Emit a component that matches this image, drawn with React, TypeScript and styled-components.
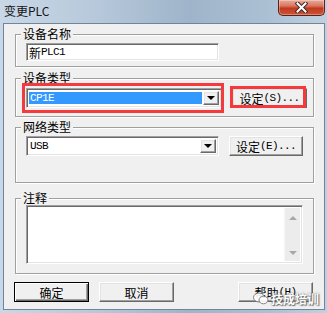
import styled, { createGlobalStyle, css } from 'styled-components';

const GlobalStyle = createGlobalStyle`
  html, body {
    margin: 0;
    padding: 0;
    background: #b8cadc;
  }
  body {
    font-family: "Noto Sans CJK SC", "Liberation Sans", sans-serif;
  }
`;

const sunken = css`
  border: 1px solid;
  border-color: #a0a0a0 #fff #fff #a0a0a0;
  box-shadow: inset 1px 1px 0 #696969, inset -1px -1px 0 #e3e3e3;
`;

const raised = css`
  border: 1px solid;
  border-color: #fff #696969 #696969 #fff;
  box-shadow: inset -1px -1px 0 #a0a0a0, inset 1px 1px 0 #e3e3e3;
`;

const Window = styled.div`
  position: relative;
  width: 327px;
  height: 313px;
  box-sizing: border-box;
  padding: 0 2px 3px 3px;
  display: flex;
  flex-direction: column;
  overflow: hidden;
  background: linear-gradient(90deg, #c9d8e7 0%, #b6c8da 30%, #9fb4ca 58%, #acc0d4 82%, #c0d0e0 100%);
`;

const TitleBar = styled.div`
  height: 23px;
  display: flex;
  align-items: flex-start;
  justify-content: space-between;
`;

const Title = styled.span`
  margin: 3px 0 0 1px;
  font-size: 12px;
  line-height: 16px;
  color: #151515;
`;

const CloseButton = styled.div`
  width: 47px;
  height: 16px;
  box-sizing: border-box;
  border: 1px solid #5a2118;
  border-top: none;
  border-radius: 0 0 5px 5px;
  background: linear-gradient(#e9ab9c 0%, #d8755e 40%, #c1391d 55%, #cc5536 100%);
  box-shadow: inset 0 0 0 1px rgba(255, 255, 255, 0.3);
  display: flex;
  align-items: center;
  justify-content: center;
`;

const Client = styled.div`
  flex: 1;
  position: relative;
  background: #f0f0f0;
  border: 1px solid #6f859b;
  padding: 4px 10px 0 11px;
`;

const Group = styled.fieldset<{ $top: number; $bottom: number }>`
  margin: ${p => p.$top}px 0 0;
  padding: 0 10px ${p => p.$bottom}px;
  min-width: 0;
  border: 1px solid #a0a0a0;
  box-shadow: inset 1px 1px 0 #fff, 1px 1px 0 #fff;
`;

const Legend = styled.legend`
  margin-left: -5px;
  padding: 0 2px;
  height: 12px;
  font-size: 12px;
  line-height: 12px;
  color: #000;
  background: #f0f0f0;
`;

const Row = styled.div<{ $top: number }>`
  display: flex;
  gap: 10px;
  margin-top: ${p => p.$top}px;
`;

const Lat = styled.span`
  font-family: "Liberation Mono", monospace;
  font-size: 11px;
  letter-spacing: -0.6px;
`;

const Edit = styled.div`
  width: 193px;
  height: 18px;
  box-sizing: border-box;
  padding-left: 2px;
  display: flex;
  align-items: center;
  font-size: 12px;
  background: #fff;
  ${sunken}
`;

const Combo = styled.div`
  width: 196px;
  height: 20px;
  box-sizing: border-box;
  padding: 2px;
  display: flex;
  background: #fff;
  ${sunken}
`;

const ComboValue = styled.div<{ $selected?: boolean }>`
  flex: 1;
  margin: 1px 1px 1px 0;
  padding-left: 1px;
  display: flex;
  align-items: center;
  color: ${p => (p.$selected ? '#fff' : '#000')};
  background: ${p => (p.$selected ? '#3399ff' : 'transparent')};
`;

const DropButton = styled.div`
  width: 16px;
  box-sizing: border-box;
  display: flex;
  align-items: center;
  justify-content: center;
  background: #f0f0f0;
  ${raised}
`;

const Arrow = styled.div`
  width: 0;
  height: 0;
  border-left: 4px solid transparent;
  border-right: 4px solid transparent;
  border-top: 4px solid #000;
`;

const Marked = styled.div<{ $inset: string }>`
  position: relative;
  &::after {
    content: '';
    position: absolute;
    inset: ${p => p.$inset};
    border: 3px solid #f43a3c;
    pointer-events: none;
  }
`;

const Button = styled.button<{ $default?: boolean }>`
  appearance: none;
  width: 75px;
  height: 20px;
  box-sizing: border-box;
  padding: 0;
  display: flex;
  align-items: center;
  justify-content: center;
  font-family: "Noto Sans CJK SC", sans-serif;
  font-size: 12px;
  color: #000;
  background: #f0f0f0;
  ${raised}
  ${p =>
    p.$default &&
    css`
      border-color: #000;
      box-shadow: inset 1px 1px 0 #fff, inset -1px -1px 0 #696969, inset -2px -2px 0 #a0a0a0;
    `}
`;

const Memo = styled.div`
  width: 277px;
  height: 59px;
  box-sizing: border-box;
  padding: 2px 2px 2px 0;
  display: flex;
  justify-content: flex-end;
  background: #fff;
  ${sunken}
`;

const ScrollBar = styled.div`
  width: 15px;
  display: flex;
  flex-direction: column;
  justify-content: space-between;
  align-items: center;
  padding: 8px 0 6px;
  background: #ececec;
  border-left: 1px solid #f6f6f6;
`;

const ScrollArrow = styled.div<{ $up?: boolean }>`
  width: 0;
  height: 0;
  border-left: 4px solid transparent;
  border-right: 4px solid transparent;
  ${p => (p.$up ? 'border-bottom: 4px solid #a8a8a8;' : 'border-top: 4px solid #a8a8a8;')}
`;

const Buttons = styled.div`
  display: flex;
  gap: 10px;
  margin: 8px 1px 0 -1px;
  & > :last-child {
    margin-left: auto;
  }
`;

const Watermark = styled.div`
  position: absolute;
  right: 8px;
  bottom: 6px;
  display: flex;
  align-items: center;
  gap: 2px;
  font-size: 12px;
  font-weight: 700;
  color: #fff;
  opacity: 0.9;
  text-shadow: 0 0 2px #555, 1px 1px 1px #666;
`;

export default function App() {
  return (
    <Window>
      <GlobalStyle />
      <TitleBar>
        <Title>变更PLC</Title>
        <CloseButton>
          <svg width="13" height="11" viewBox="0 0 13 11">
            <path d="M2.5 1.5l8 8M10.5 1.5l-8 8" stroke="#3a2a2a" strokeWidth="4" strokeLinecap="square" />
            <path d="M2.5 1.5l8 8M10.5 1.5l-8 8" stroke="#fff" strokeWidth="2" strokeLinecap="square" />
          </svg>
        </CloseButton>
      </TitleBar>
      <Client>
        <Group $top={0} $bottom={5}>
          <Legend>设备名称</Legend>
          <Row $top={3}>
            <Edit>
              新<Lat>PLC1</Lat>
            </Edit>
          </Row>
        </Group>

        <Group $top={5} $bottom={8}>
          <Legend>设备类型</Legend>
          <Row $top={4}>
            <Marked $inset="-5px -2px -5px -4px">
              <Combo>
                <ComboValue $selected>
                  <Lat>CP1E</Lat>
                </ComboValue>
                <DropButton>
                  <Arrow />
                </DropButton>
              </Combo>
            </Marked>
            <Marked $inset="-2px 1px 0 -2px">
              <Button>
                设定<Lat>(S)...</Lat>
              </Button>
            </Marked>
          </Row>
        </Group>

        <Group $top={4} $bottom={26}>
          <Legend>网络类型</Legend>
          <Row $top={3}>
            <Combo>
              <ComboValue>
                <Lat>USB</Lat>
              </ComboValue>
              <DropButton>
                <Arrow />
              </DropButton>
            </Combo>
            <Button>
              设定<Lat>(E)...</Lat>
            </Button>
          </Row>
        </Group>

        <Group $top={9} $bottom={9}>
          <Legend>注释</Legend>
          <Row $top={1}>
            <Memo>
              <ScrollBar>
                <ScrollArrow $up />
                <ScrollArrow />
              </ScrollBar>
            </Memo>
          </Row>
        </Group>

        <Buttons>
          <Button $default>确定</Button>
          <Button>取消</Button>
          <Button>
            帮助<Lat>(H)</Lat>
          </Button>
        </Buttons>
      </Client>
      <Watermark>
        <svg width="16" height="13" viewBox="0 0 16 13">
          <ellipse cx="6" cy="5.5" rx="5.5" ry="4.5" fill="#fff" stroke="#777" />
          <ellipse cx="10.5" cy="8" rx="4.5" ry="3.8" fill="#fff" stroke="#777" />
        </svg>
        技成培训
      </Watermark>
    </Window>
  );
}
